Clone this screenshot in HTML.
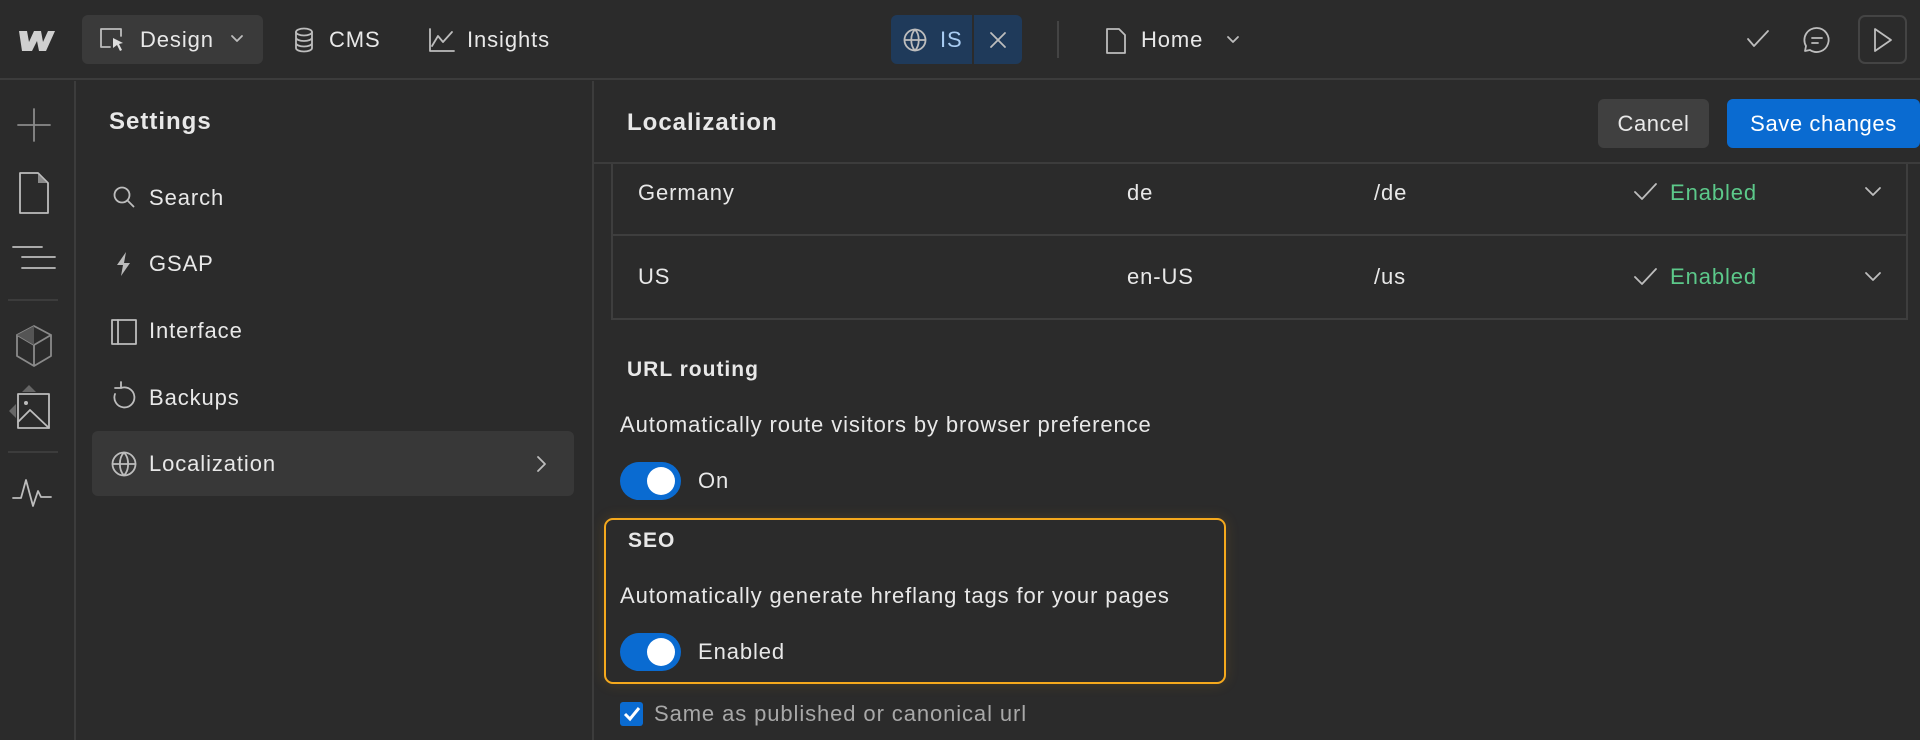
<!DOCTYPE html>
<html><head><meta charset="utf-8"><style>
*{box-sizing:border-box;margin:0;padding:0}
body{width:1920px;height:740px;background:#2b2b2b;font-family:"Liberation Sans",sans-serif;color:#e8e8e8;position:relative;overflow:hidden}
.a{position:absolute;white-space:nowrap}
.t{font-size:22px;line-height:26px;letter-spacing:0.9px}
.b{font-weight:bold;letter-spacing:1px}
svg{position:absolute;overflow:visible}
.ic{stroke:#bdbdbd;fill:none;stroke-width:1.8;stroke-linecap:round;stroke-linejoin:round}
.gr{stroke:#8a8a8a;fill:none;stroke-width:1.8;stroke-linecap:round;stroke-linejoin:round}
.tog{position:absolute;width:61px;height:38px;border-radius:19px;background:#0a6bd1}
.tog:after{content:"";position:absolute;right:6px;top:5px;width:28px;height:28px;border-radius:50%;background:#fff}
</style></head><body>
<!-- top bar -->
<div class="a" style="left:0;top:0;width:1920px;height:80px;background:#2b2b2b;border-bottom:2px solid #3c3c3c"></div>
<svg style="left:16px;top:30px" width="40" height="22"><path d="M3 1h8l2 11 5-11h7l2 11 5-11h7l-9 20h-7l-2-10-5 10H6z" fill="#cfcfcf"/></svg>
<div class="a" style="left:82px;top:15px;width:181px;height:49px;background:#3a3a3a;border-radius:6px"></div>
<svg style="left:100px;top:27px" width="30" height="26"><path class="ic" d="M1 20V2h20v7M1 20h9"/><path d="M13 11l10 5-4 1 3 6-2 1-3-6-4 3z" fill="#ddd"/></svg>
<div class="a t" style="left:140px;top:27px">Design</div>
<svg style="left:230px;top:34px" width="14" height="10"><path class="ic" d="M2 2l5 5 5-5"/></svg>
<svg style="left:294px;top:28px" width="20" height="26"><ellipse class="ic" cx="10" cy="4" rx="8" ry="3.5"/><path class="ic" d="M2 4v16c0 2 3.5 3.5 8 3.5s8-1.5 8-3.5V4M2 9.5c0 2 3.5 3.5 8 3.5s8-1.5 8-3.5M2 15c0 2 3.5 3.5 8 3.5s8-1.5 8-3.5"/></svg>
<div class="a t" style="left:329px;top:27px">CMS</div>
<svg style="left:429px;top:28px" width="26" height="24"><path class="ic" d="M1 1v22h24M3 18l6-10 5 6 9-10"/></svg>
<div class="a t" style="left:467px;top:27px">Insights</div>
<div class="a" style="left:891px;top:15px;width:131px;height:49px;background:#1f3a5a;border-radius:6px"></div>
<div class="a" style="left:972px;top:15px;width:2px;height:49px;background:#2b2b2b"></div>
<svg style="left:903px;top:28px" width="24" height="24"><circle class="ic" stroke="#9cc4f0" cx="12" cy="12" r="10.5"/><path class="ic" stroke="#9cc4f0" d="M1.5 12h21M12 1.5c-5 5-5 16 0 21c5-5 5-16 0-21"/></svg>
<div class="a t" style="left:940px;top:27px;color:#a9cdf3">IS</div>
<svg style="left:990px;top:32px" width="16" height="16"><path class="ic" stroke="#a9cdf3" d="M1 1l14 14M15 1L1 15"/></svg>
<div class="a" style="left:1057px;top:21px;width:2px;height:37px;background:#444"></div>
<svg style="left:1106px;top:28px" width="20" height="26"><path class="ic" d="M1 1h12l6 6v18H1z"/></svg>
<div class="a t" style="left:1141px;top:27px">Home</div>
<svg style="left:1226px;top:35px" width="14" height="10"><path class="ic" d="M2 2l5 5 5-5"/></svg>
<svg style="left:1747px;top:30px" width="22" height="18"><path class="ic" stroke="#4fb87a" d="M1 9l6 7L21 1"/></svg>
<svg style="left:1803px;top:26px" width="28" height="28"><path class="ic" d="M14 2a12 12 0 1 1-7 22l-5 1 1-5A12 12 0 0 1 14 2zM9 12h10M9 17h6"/></svg>
<div class="a" style="left:1858px;top:15px;width:49px;height:49px;border:2px solid #444;border-radius:7px"></div>
<svg style="left:1873px;top:28px" width="20" height="24"><path class="ic" d="M2 1l16 11L2 23z"/></svg>
<!-- left rail -->
<div class="a" style="left:74px;top:81px;width:2px;height:659px;background:#3c3c3c"></div>
<svg style="left:17px;top:108px" width="34" height="34"><path class="gr" d="M17 1v32M1 17h32"/></svg>
<svg style="left:18px;top:172px" width="32" height="42"><path class="ic" d="M2 1h18l10 10v30H2z"/><path d="M20 2v9h9z" fill="#8a8a8a"/></svg>
<svg style="left:12px;top:246px" width="45" height="24"><path class="ic" d="M1 1h29M10 11h33M10 22h33"/></svg>
<div class="a" style="left:8px;top:299px;width:50px;height:2px;background:#3c3c3c"></div>
<svg style="left:15px;top:325px" width="38" height="42"><path class="gr" d="M19 1l17 9v21l-17 10L2 31V10zM2 10l17 10 17-10M19 20v21"/><path d="M19 1L2 10l17 10z" fill="#555"/></svg>
<svg style="left:9px;top:385px" width="44" height="46"><path d="M20 0l7 7h-14zM0 26l7-7v14z" fill="#666"/><rect class="ic" x="9" y="9" width="31" height="34"/><circle cx="17" cy="18" r="2" fill="#bbb"/><path class="ic" d="M9 37l12-12 19 18"/></svg>
<div class="a" style="left:8px;top:451px;width:50px;height:2px;background:#3c3c3c"></div>
<svg style="left:12px;top:478px" width="42" height="30"><path class="ic" d="M1 20h8l5-18 7 26 5-15 3 6h10"/></svg>
<!-- settings panel -->
<div class="a" style="left:592px;top:81px;width:2px;height:659px;background:#3c3c3c"></div>
<div class="a b" style="left:109px;top:108px;font-size:24px">Settings</div>
<svg style="left:113px;top:186px" width="22" height="22"><circle class="ic" cx="9" cy="9" r="7.5"/><path class="ic" d="M14.5 14.5l6 6"/></svg>
<div class="a t" style="left:149px;top:185px">Search</div>
<svg style="left:116px;top:252px" width="16" height="24"><path d="M10 0L1 13h6l-2 11 9-13H8z" fill="#bbb"/></svg>
<div class="a t" style="left:149px;top:251px">GSAP</div>
<svg style="left:111px;top:319px" width="26" height="26"><rect class="ic" x="1" y="1" width="24" height="24"/><path class="ic" d="M7 1v24"/></svg>
<div class="a t" style="left:149px;top:318px">Interface</div>
<svg style="left:112px;top:381px" width="26" height="30"><path class="ic" d="M9 7a10 10 0 1 1-6 6M9 1v6H3"/></svg>
<div class="a t" style="left:149px;top:385px">Backups</div>
<div class="a" style="left:92px;top:431px;width:482px;height:65px;background:#383838;border-radius:6px"></div>
<svg style="left:111px;top:451px" width="26" height="26"><circle class="ic" stroke="#ddd" cx="13" cy="13" r="11.5"/><path class="ic" stroke="#ddd" d="M1.5 13h23M13 1.5c-5.5 5.5-5.5 17.5 0 23c5.5-5.5 5.5-17.5 0-23"/></svg>
<div class="a t" style="left:149px;top:451px">Localization</div>
<svg style="left:536px;top:455px" width="12" height="18"><path class="ic" d="M2 2l7 7-7 7"/></svg>
<!-- main header -->
<div class="a b" style="left:627px;top:109px;font-size:24px">Localization</div>
<div class="a" style="left:594px;top:162px;width:1326px;height:2px;background:#3c3c3c"></div>
<div class="a" style="left:1598px;top:99px;width:111px;height:49px;background:#404040;border-radius:6px;font-size:22px;letter-spacing:0.6px;line-height:49px;text-align:center">Cancel</div>
<div class="a" style="left:1727px;top:99px;width:193px;height:49px;background:#0a6bd1;border-radius:6px;font-size:22px;letter-spacing:0.6px;line-height:49px;text-align:center;color:#fff">Save changes</div>
<!-- table -->
<div class="a" style="left:611px;top:164px;width:1297px;height:156px;border:2px solid #3e3e3e;border-top:none"></div>
<div class="a" style="left:611px;top:234px;width:1297px;height:2px;background:#3e3e3e"></div>
<div class="a t" style="left:638px;top:180px">Germany</div>
<div class="a t" style="left:1127px;top:180px">de</div>
<div class="a t" style="left:1374px;top:180px">/de</div>
<svg style="left:1634px;top:183px" width="24" height="18"><path class="ic" stroke="#4fb87a" d="M1 9l7 7L22 1"/></svg>
<div class="a t" style="left:1670px;top:180px;color:#5cc98a">Enabled</div>
<svg style="left:1865px;top:187px" width="16" height="10"><path class="ic" stroke="#ddd" d="M1 1l7 7 7-7"/></svg>
<div class="a t" style="left:638px;top:264px">US</div>
<div class="a t" style="left:1127px;top:264px">en-US</div>
<div class="a t" style="left:1374px;top:264px">/us</div>
<svg style="left:1634px;top:268px" width="24" height="18"><path class="ic" stroke="#4fb87a" d="M1 9l7 7L22 1"/></svg>
<div class="a t" style="left:1670px;top:264px;color:#5cc98a">Enabled</div>
<svg style="left:1865px;top:272px" width="16" height="10"><path class="ic" stroke="#ddd" d="M1 1l7 7 7-7"/></svg>
<!-- URL routing -->
<div class="a b" style="left:627px;top:358px;font-size:21px">URL routing</div>
<div class="a t" style="left:620px;top:412px">Automatically route visitors by browser preference</div>
<div class="tog" style="left:620px;top:462px"></div>
<div class="a t" style="left:698px;top:468px">On</div>
<!-- SEO -->
<div class="a" style="left:604px;top:518px;width:622px;height:166px;border:2px solid #f5a91d;border-radius:9px;box-shadow:0 0 14px rgba(245,169,29,0.15)"></div>
<div class="a b" style="left:628px;top:529px;font-size:21px">SEO</div>
<div class="a t" style="left:620px;top:583px">Automatically generate hreflang tags for your pages</div>
<div class="tog" style="left:620px;top:633px"></div>
<div class="a t" style="left:698px;top:639px">Enabled</div>
<div class="a" style="left:620px;top:702px;width:23px;height:24px;background:#0a6bd1;border-radius:3px"></div>
<svg style="left:623px;top:706px" width="18" height="16"><path stroke="#fff" stroke-width="3" fill="none" d="M2 8l5 5 9-11"/></svg>
<div class="a t" style="left:654px;top:701px;color:#a8a8a8">Same as published or canonical url</div>
</body></html>
